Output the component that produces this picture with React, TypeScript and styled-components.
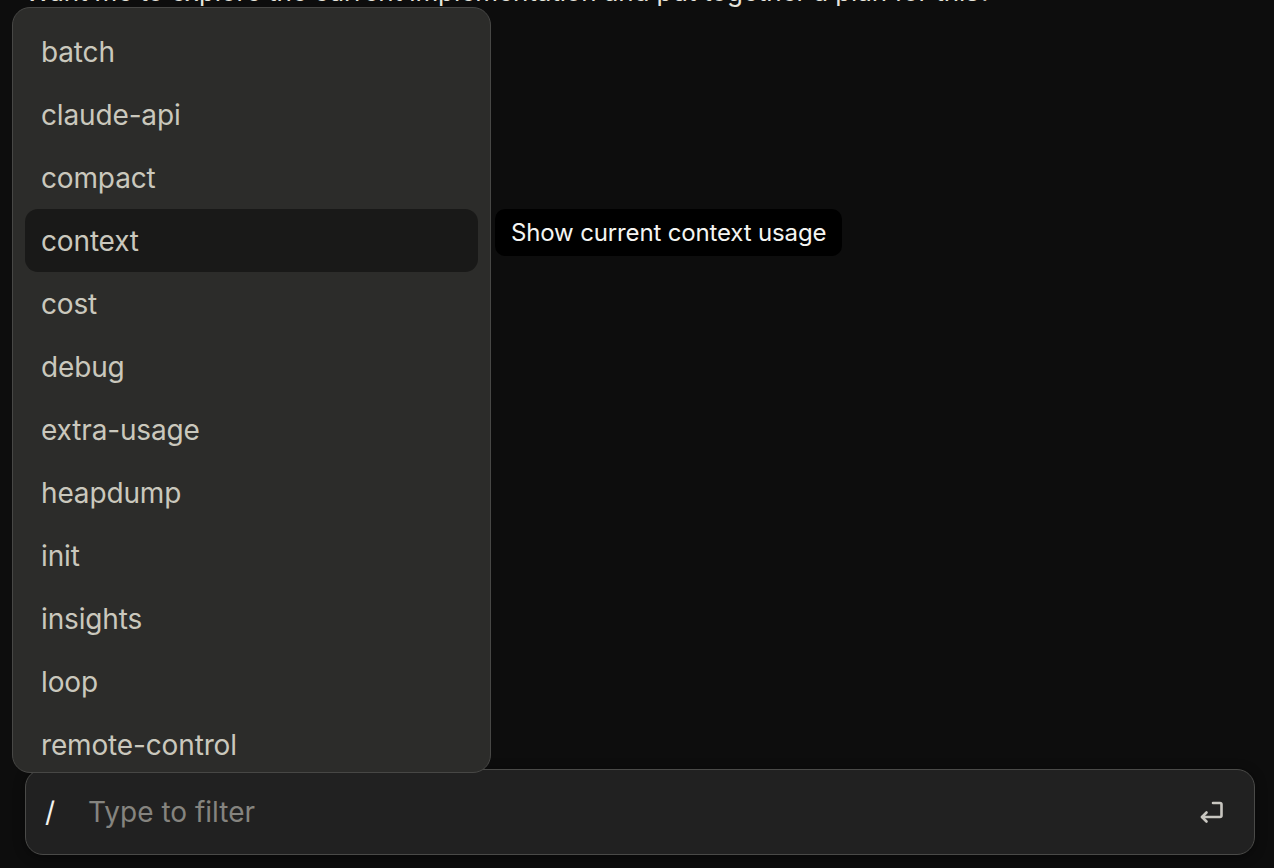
import { createGlobalStyle } from "styled-components";
import styled from "styled-components";

const GlobalStyle = createGlobalStyle`
    html, body {
        margin: 0;
        padding: 0;
        background-color: #0d0d0d;
        font-family: Inter, "Noto Sans", "Liberation Sans", sans-serif;
    }
`;

const Page = styled.div`
    position: relative;
    display: flex;
    flex-direction: column;
    justify-content: space-between;
    width: 1274px;
    height: 868px;
    padding: 0 19px 13px 25px;
    box-sizing: border-box;
    overflow: hidden;
    background-color: #0d0d0d;
`;

const Transcript = styled.div`
    margin-top: -24px;
    color: #e6e4dc;
    font-size: 26px;
    line-height: 32px;
    letter-spacing: -0.1px;
`;

const Popover = styled.div`
    position: absolute;
    left: 12px;
    top: 7px;
    width: 479px;
    height: 766px;
    padding: 12px 12px 0 12px;
    box-sizing: border-box;
    display: flex;
    flex-direction: column;
    background-color: #2c2c2a;
    border: 1px solid #474745;
    border-radius: 18px;
    overflow: hidden;
    z-index: 2;
`;

const CommandRow = styled.div<{ $active?: boolean }>`
    display: flex;
    align-items: center;
    flex-shrink: 0;
    height: 63px;
    padding-left: 16px;
    border-radius: 13px;
    color: #cac8bd;
    font-size: 28px;
    letter-spacing: -0.15px;
    background-color: ${(p) => (p.$active ? "#191918" : "transparent")};
`;

const Tooltip = styled.div`
    position: absolute;
    left: 495px;
    top: 209px;
    height: 47px;
    padding: 0 16px;
    display: flex;
    align-items: center;
    background-color: #000;
    border-radius: 10px;
    color: #f5f5f2;
    font-size: 24px;
    letter-spacing: -0.15px;
    white-space: nowrap;
    z-index: 3;
`;

const InputBar = styled.div`
    display: flex;
    align-items: center;
    gap: 12px;
    height: 86px;
    padding: 0 28px 0 19px;
    box-sizing: border-box;
    background-color: #212121;
    border: 1.5px solid #4a4a48;
    border-radius: 18px;
    box-shadow: 0 2px 12px rgba(0, 0, 0, 0.4);
`;

const Slash = styled.span`
    width: 31px;
    color: #f2f2ee;
    font-size: 28px;
`;

const FilterInput = styled.input`
    flex: 1;
    min-width: 0;
    border: none;
    outline: none;
    background: transparent;
    color: #e6e4dc;
    font-family: inherit;
    font-size: 28px;
    padding: 0;
    &::placeholder {
        color: #85847f;
    }
`;

const EnterIcon = styled.svg`
    flex-shrink: 0;
    width: 28px;
    height: 28px;
    color: #c8c6c0;
`;

const commands = [
    "batch",
    "claude-api",
    "compact",
    "context",
    "cost",
    "debug",
    "extra-usage",
    "heapdump",
    "init",
    "insights",
    "loop",
    "remote-control",
    "review",
];

function App() {
    const selected = "context";

    return (
        <>
            <GlobalStyle />
            <Page>
                <Transcript>
                    Want me to explore the current implementation and put together a plan for this?
                </Transcript>
                <Popover>
                    {commands.map((cmd) => (
                        <CommandRow key={cmd} $active={cmd === selected}>
                            {cmd}
                        </CommandRow>
                    ))}
                </Popover>
                <Tooltip>Show current context usage</Tooltip>
                <InputBar>
                    <Slash>/</Slash>
                    <FilterInput placeholder="Type to filter" />
                    <EnterIcon viewBox="0 0 28 28" fill="none" stroke="currentColor" strokeWidth="2.6" strokeLinecap="round" strokeLinejoin="round">
                        <path d="M15 5h7a1.5 1.5 0 0 1 1.5 1.5v11a1.5 1.5 0 0 1-1.5 1.5H4" />
                        <path d="M8.5 14.5L4 19l4.5 4.5" />
                    </EnterIcon>
                </InputBar>
            </Page>
        </>
    );
}

export default App;
